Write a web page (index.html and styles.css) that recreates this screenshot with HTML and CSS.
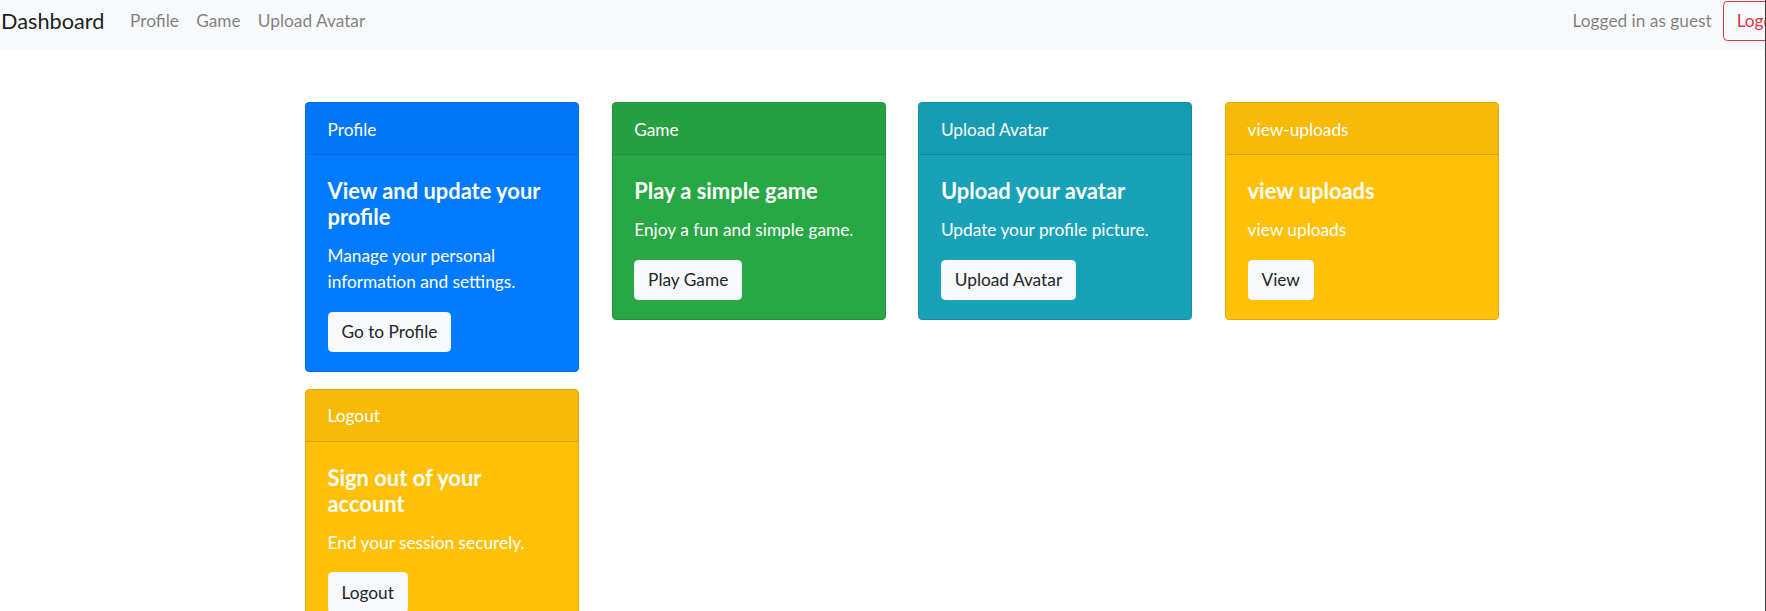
FILE: index.html
```html
<!DOCTYPE html>
<html lang="en">
<head>
<meta charset="utf-8">
<title>Dashboard</title>
<link rel="stylesheet" href="styles.css">
</head>
<body>
<nav class="navbar">
  <a class="brand" href="#">Dashboard</a>
  <ul class="nav-links">
    <li><a href="#">Profile</a></li>
    <li><a href="#">Game</a></li>
    <li><a href="#">Upload Avatar</a></li>
  </ul>
  <div class="nav-right">
    <span class="nav-text">Logged in as guest</span>
    <button class="btn-outline-danger">Logout</button>
  </div>
</nav>

<main class="cards">
  <section class="card card-blue">
    <div class="card-header">Profile</div>
    <div class="card-body">
      <h5 class="card-title">View and update your profile</h5>
      <p class="card-text">Manage your personal information and settings.</p>
      <a class="btn-light" href="#">Go to Profile</a>
    </div>
  </section>
  <section class="card card-green">
    <div class="card-header">Game</div>
    <div class="card-body">
      <h5 class="card-title">Play a simple game</h5>
      <p class="card-text">Enjoy a fun and simple game.</p>
      <a class="btn-light" href="#">Play Game</a>
    </div>
  </section>
  <section class="card card-teal">
    <div class="card-header">Upload Avatar</div>
    <div class="card-body">
      <h5 class="card-title">Upload your avatar</h5>
      <p class="card-text">Update your profile picture.</p>
      <a class="btn-light" href="#">Upload Avatar</a>
    </div>
  </section>
  <section class="card card-yellow">
    <div class="card-header">view-uploads</div>
    <div class="card-body">
      <h5 class="card-title">view uploads</h5>
      <p class="card-text">view uploads</p>
      <a class="btn-light" href="#">View</a>
    </div>
  </section>
  <section class="card card-yellow">
    <div class="card-header">Logout</div>
    <div class="card-body">
      <h5 class="card-title">Sign out of your account</h5>
      <p class="card-text">End your session securely.</p>
      <a class="btn-light" href="#">Logout</a>
    </div>
  </section>
</main>
<div class="edge-line"></div>
</body>
</html>
```

FILE: styles.css
```css
* { box-sizing: border-box; }

html, body {
  margin: 0;
  padding: 0;
  overflow: hidden;
  height: 611px;
}

body {
  font-family: "Lato", "Open Sans", "Liberation Sans", sans-serif;
  font-size: 17.3px;
  line-height: 1.5;
  color: #212529;
  background: #fff;
}

a { text-decoration: none; }

.navbar {
  display: flex;
  align-items: center;
  height: 50px;
  padding: 1px 0 9px 1px;
  margin-right: -37px;
  background: #f8f9fa;
}

.brand {
  font-size: 21.7px;
  line-height: 1.5;
  padding: 5.4px 0;
  margin-right: 17.2px;
  color: rgba(0, 0, 0, 0.9);
}

.nav-links {
  display: flex;
  list-style: none;
  margin: 0;
  padding: 0;
}

.nav-links a {
  display: block;
  padding: 8.6px;
  color: rgba(0, 0, 0, 0.5);
}

.nav-right {
  display: flex;
  align-items: center;
  margin-left: auto;
}

.nav-text {
  color: rgba(0, 0, 0, 0.5);
  padding: 8.6px 0;
  margin-right: 11px;
}

.btn-outline-danger {
  font: inherit;
  line-height: 1.5;
  color: #dc3545;
  background: transparent;
  border: 1px solid #dc3545;
  border-radius: 4.3px;
  padding: 6.45px 12.9px;
}

.cards {
  display: grid;
  grid-template-columns: repeat(4, 274px);
  column-gap: 32.7px;
  row-gap: 17px;
  align-items: start;
  margin: 52px 0 0 305px;
}

.card {
  border: 1px solid rgba(0, 0, 0, 0.125);
  border-radius: 4.3px;
  color: #fff;
  overflow: hidden;
}

.card-blue { background: #007bff; }
.card-green { background: #28a745; }
.card-teal { background: #17a2b8; }
.card-yellow { background: #ffc107; }

.card-header {
  padding: 13.5px 21.5px 11.5px;
  background: rgba(0, 0, 0, 0.03);
  border-bottom: 1px solid rgba(0, 0, 0, 0.125);
}

.card-body {
  padding: 23px 21.5px 19px;
}

.card-title {
  margin: 0 0 13.5px;
  font-size: 21.9px;
  font-weight: 700;
  line-height: 1.18;
}

.card-text {
  margin: 0 0 16.5px;
}

.btn-light {
  display: inline-block;
  color: #212529;
  background: #f8f9fa;
  border: 1px solid #f8f9fa;
  border-radius: 4.3px;
  padding: 6.4px 12.9px 6px;
  line-height: 1.5;
}

.edge-line {
  position: fixed;
  top: 0;
  right: 0;
  width: 1px;
  height: 100%;
  background: #3a3a3a;
}
```
